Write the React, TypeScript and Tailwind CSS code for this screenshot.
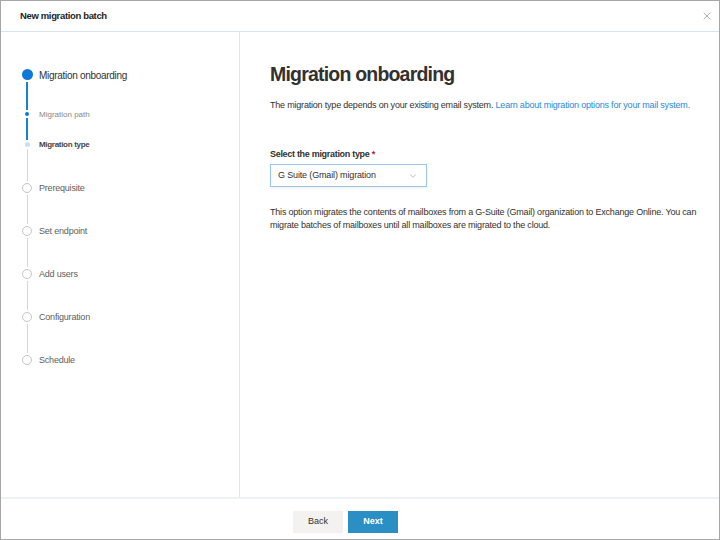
import { ChevronDown, X } from "lucide-react";

type Step = {
  label: string;
  kind: "current" | "sub" | "subNext" | "todo";
  line?: number;
};

const steps: Step[] = [
  { label: "Migration onboarding", kind: "current", line: 28 },
  { label: "Migration path", kind: "sub", line: 22 },
  { label: "Migration type", kind: "subNext", line: 32 },
  { label: "Prerequisite", kind: "todo", line: 29 },
  { label: "Set endpoint", kind: "todo", line: 29 },
  { label: "Add users", kind: "todo", line: 29 },
  { label: "Configuration", kind: "todo", line: 29 },
  { label: "Schedule", kind: "todo" },
];

function Dot({ kind }: { kind: Step["kind"] }) {
  if (kind === "current") return <div className="h-[11px] w-[11px] rounded-full bg-[#0f78d4]" />;
  if (kind === "sub") return <div className="h-[4px] w-[4px] rounded-full bg-[#0f78d4]" />;
  if (kind === "subNext") return <div className="h-[5px] w-[5px] rounded-full bg-[#c7e0f4]" />;
  return <div className="h-[10px] w-[10px] rounded-full border border-[#c8c6c4] bg-white" />;
}

const dotSize: Record<Step["kind"], string> = {
  current: "h-[11px]",
  sub: "h-[4px]",
  subNext: "h-[5px]",
  todo: "h-[10px]",
};

const labelStyle: Record<Step["kind"], string> = {
  current: "text-[10px] tracking-[-0.3px] text-[#323130]",
  sub: "text-[8px] text-[#8a8886]",
  subNext: "text-[8px] font-bold tracking-[-0.3px] text-[#484644]",
  todo: "text-[9px] tracking-[-0.2px] text-[#605e5c]",
};

// blue connector while inside the current step, grey afterwards
const lineStyle: Record<Step["kind"], string> = {
  current: "w-[2px] bg-[#1a7fd6]",
  sub: "w-[2px] bg-[#1a7fd6]",
  subNext: "w-px bg-[#d6d6d6]",
  todo: "w-px bg-[#d6d6d6]",
};

function Stepper() {
  return (
    <div className="flex flex-col pl-[20px] pt-[37px]">
      {steps.map((s) => (
        <div key={s.label} className="flex">
          <div className="flex w-[12px] flex-col items-center">
            <Dot kind={s.kind} />
            {s.line && <div className={`my-[2px] ${lineStyle[s.kind]}`} style={{ height: s.line }} />}
          </div>
          <div className="ml-[6px] flex flex-col">
            <div className={`flex items-center whitespace-nowrap pt-px ${dotSize[s.kind]} ${labelStyle[s.kind]}`}>
              {s.label}
            </div>
          </div>
        </div>
      ))}
    </div>
  );
}

export default function App() {
  return (
    <div
      className="flex h-[540px] w-[720px] flex-col border border-[#a6a6a6] bg-white text-[#323130]"
      style={{ fontFamily: '"Liberation Sans", Arial, sans-serif' }}
    >
      <header className="flex h-[31px] shrink-0 items-center justify-between border-b border-[#d6e4f0] pl-[19px] pr-[6px]">
        <span className="text-[9.5px] font-bold tracking-[-0.35px] text-[#201f1e]">New migration batch</span>
        <X className="h-[12px] w-[12px] text-[#7a7876]" strokeWidth={1.2} />
      </header>

      <div className="flex min-h-0 flex-1">
        <aside className="w-[239px] shrink-0 border-r border-[#dbe6f0]">
          <Stepper />
        </aside>

        <main className="flex-1 pl-[30px] pt-[27px]">
          <h1 className="text-[19.5px] font-bold leading-[30px] tracking-[-0.8px] text-[#323130]">Migration onboarding</h1>
          <p className="mt-[10px] whitespace-nowrap text-[9px] leading-[13px] tracking-[-0.2px] text-[#323130]">
            The migration type depends on your existing email system.{" "}
            <span className="text-[#2b88d8]">Learn about migration options for your mail system.</span>
          </p>

          <div className="mt-[36px] text-[9px] font-bold leading-[13px] tracking-[-0.3px] text-[#323130]">
            Select the migration type <span className="text-[#a4262c]">*</span>
          </div>
          <div className="mt-[3px] flex h-[23px] w-[157px] items-center justify-between border border-[#9cc6e8] pl-[7px] pr-[8px] text-[9px] tracking-[-0.15px] text-[#323130] shadow-[0_1px_2px_rgba(0,0,0,0.08)]">
            <span>G Suite (Gmail) migration</span>
            <ChevronDown className="h-[10px] w-[10px] text-[#8a8886]" strokeWidth={1.3} />
          </div>

          <p className="mt-[19px] w-[440px] text-[9px] leading-[13px] tracking-[-0.2px] text-[#323130]">
            This option migrates the contents of mailboxes from a G-Suite (Gmail) organization to Exchange Online. You can
            migrate batches of mailboxes until all mailboxes are migrated to the cloud.
          </p>
        </main>
      </div>

      <footer className="flex h-[42px] shrink-0 items-start border-t-2 border-[#edf1f5] pl-[292px] pt-[12px]">
        <button className="h-[22px] w-[50px] bg-[#f3f2f1] text-[9px] text-[#323130]">Back</button>
        <button className="ml-[5px] h-[22px] w-[50px] bg-[#2b8fc6] text-[9px] font-bold text-white">Next</button>
      </footer>
    </div>
  );
}
